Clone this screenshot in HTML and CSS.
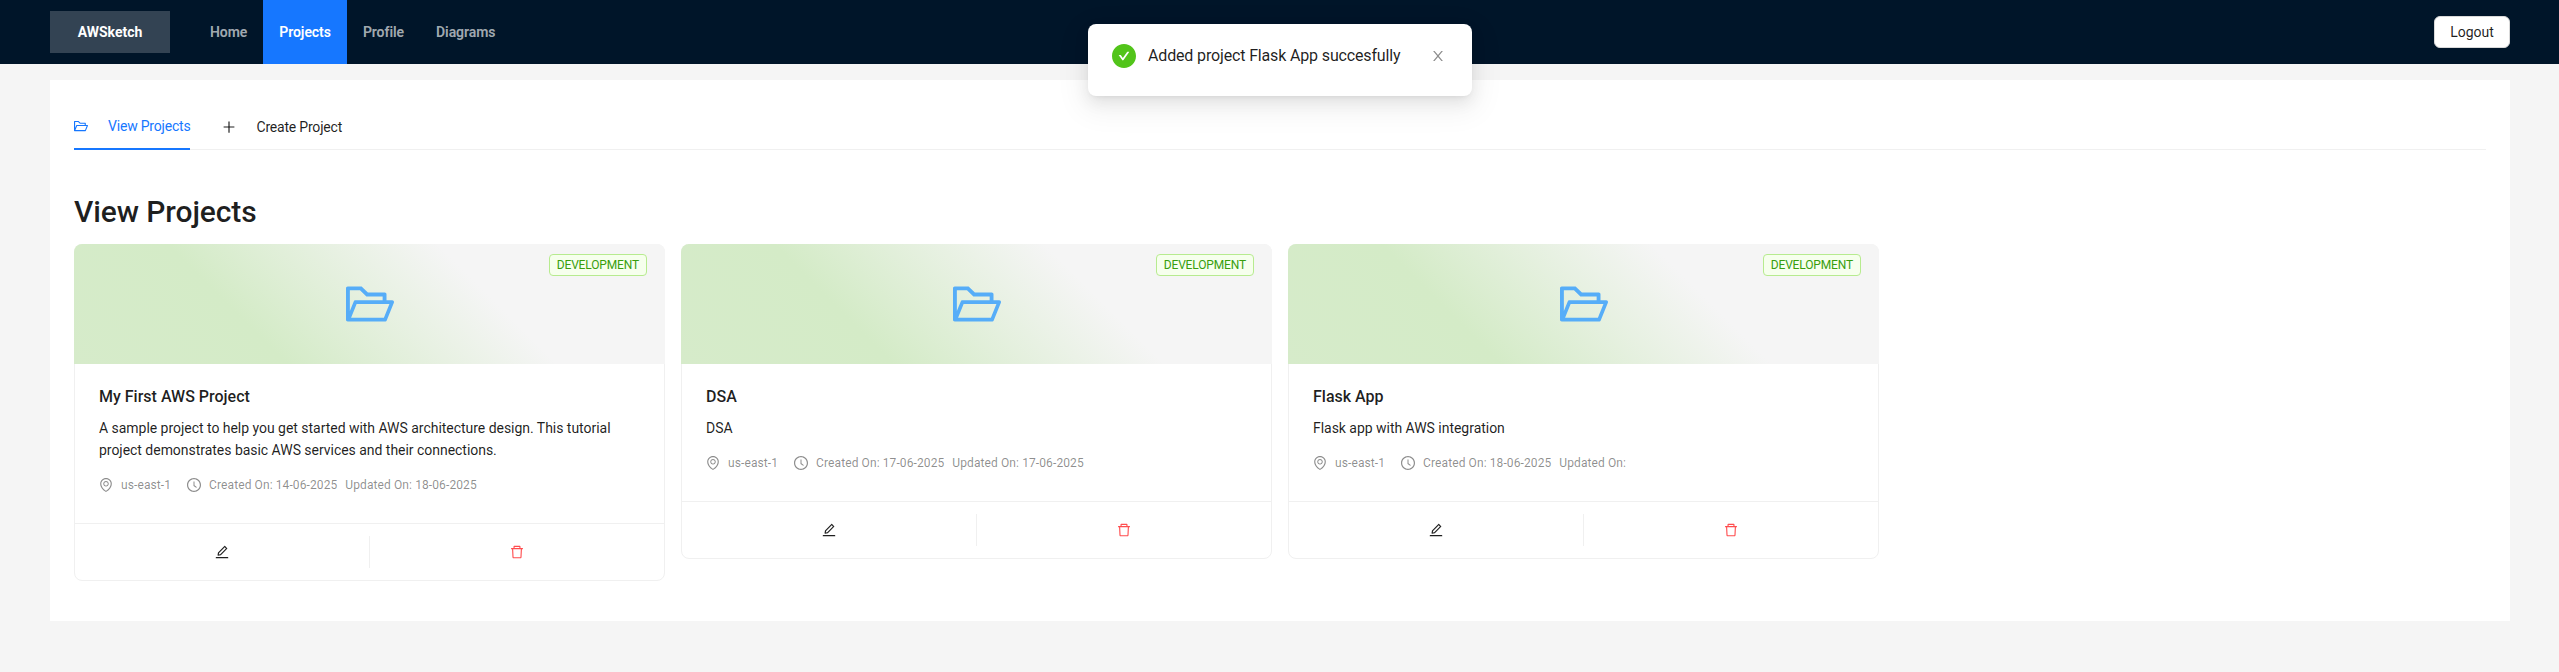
FILE: index.html
```html
<!DOCTYPE html>
<html lang="en">
<head>
    <meta charset="UTF-8">
    <title>AWSketch</title>
    <link rel="stylesheet" href="styles.css">
</head>
<body>

    <header class="topbar">
        <div class="logo">AWSketch</div>
        <nav class="menu">
            <a class="menu-item">Home</a>
            <a class="menu-item active">Projects</a>
            <a class="menu-item">Profile</a>
            <a class="menu-item">Diagrams</a>
        </nav>
        <button class="logout">Logout</button>
    </header>

    <div class="toast">
        <svg class="toast-icon" viewBox="64 64 896 896"><path d="M512 64C264.6 64 64 264.6 64 512s200.6 448 448 448 448-200.6 448-448S759.4 64 512 64zm193.5 301.7l-210.6 292a31.8 31.8 0 01-51.7 0L318.5 484.9c-3.8-5.3 0-12.7 6.5-12.7h46.9c10.2 0 19.9 4.9 25.9 13.3l71.2 98.8 157.2-218c6-8.3 15.6-13.3 25.9-13.3H699c6.5 0 10.3 7.4 6.5 12.7z"/></svg>
        <div class="toast-text">Added project Flask App succesfully</div>
        <svg class="toast-close" viewBox="64 64 896 896"><path d="M563.8 512l262.5-312.9c4.4-5.2.7-13.1-6.1-13.1h-79.8c-4.7 0-9.2 2.1-12.3 5.7L511.6 449.8 295.1 191.7c-3-3.6-7.5-5.7-12.3-5.7H203c-6.8 0-10.5 7.9-6.1 13.1L459.4 512 196.9 824.9A7.95 7.95 0 00203 838h79.8c4.7 0 9.2-2.1 12.3-5.7l216.5-258.1 216.5 258.1c3 3.6 7.5 5.7 12.3 5.7h79.8c6.8 0 10.5-7.9 6.1-13.1L563.8 512z"/></svg>
    </div>

    <main class="content">
        <div class="tabs">
            <div class="tab active">
                <svg class="icon" viewBox="64 64 896 896"><path d="M928 444H820V330.4c0-17.7-14.3-32-32-32H473L355.7 186.2a8.15 8.15 0 00-5.5-2.2H96c-17.7 0-32 14.3-32 32v592c0 17.7 14.3 32 32 32h698c13 0 24.8-7.9 29.7-20l134-332c1.5-3.8 2.3-7.9 2.3-12 0-17.7-14.3-32-32-32zM136 256h188.5l119.6 114.4H748V444H238c-13 0-24.8 7.9-29.7 20L136 643.2V256zm635.3 512H159l103.3-256h612.4L771.3 768z"/></svg>
                View Projects
            </div>
            <div class="tab">
                <svg class="icon plus" viewBox="64 64 896 896"><path d="M482 152h60q8 0 8 8v704q0 8-8 8h-60q-8 0-8-8V160q0-8 8-8z"/><path d="M176 474h672q8 0 8 8v60q0 8-8 8H176q-8 0-8-8v-60q0-8 8-8z"/></svg>
                Create Project
            </div>
        </div>

        <h2 class="page-title">View Projects</h2>

        <div class="project-grid">

            <div class="card">
                <div class="cover">
                    <span class="tag">DEVELOPMENT</span>
                    <svg class="cover-icon" viewBox="64 64 896 896"><path d="M928 444H820V330.4c0-17.7-14.3-32-32-32H473L355.7 186.2a8.15 8.15 0 00-5.5-2.2H96c-17.7 0-32 14.3-32 32v592c0 17.7 14.3 32 32 32h698c13 0 24.8-7.9 29.7-20l134-332c1.5-3.8 2.3-7.9 2.3-12 0-17.7-14.3-32-32-32zM136 256h188.5l119.6 114.4H748V444H238c-13 0-24.8 7.9-29.7 20L136 643.2V256zm635.3 512H159l103.3-256h612.4L771.3 768z"/></svg>
                </div>
                <div class="card-body">
                    <div class="card-title">My First AWS Project</div>
                    <p class="card-desc">A sample project to help you get started with AWS architecture design. This tutorial project demonstrates basic AWS services and their connections.</p>
                    <div class="card-meta">
                        <svg class="icon" viewBox="64 64 896 896"><path d="M854.6 289.1a362.49 362.49 0 00-79.9-115.7 370.83 370.83 0 00-118.2-77.8C610.7 76.6 562.1 67 512 67c-50.1 0-98.7 9.6-144.5 28.5-44.3 18.3-84 44.5-118.2 77.8A363.6 363.6 0 00169.4 289c-19.5 45-29.4 92.8-29.4 142 0 70.6 16.9 140.9 50.1 208.7 26.7 54.5 64 107.6 111 158.1 80.3 86.2 164.5 138.9 188.4 153a43.9 43.9 0 0022.4 6.1c7.8 0 15.5-2 22.4-6.1 23.9-14.1 108.1-66.8 188.4-153 47-50.4 84.3-103.6 111-158.1C867.1 572 884 501.8 884 431.1c0-49.2-9.9-97-29.4-142zM512 880.2c-65.9-41.9-300-207.8-300-449.1 0-77.9 31.1-151.1 87.6-206.3C356.3 169.5 431.7 139 512 139s155.7 30.5 212.4 85.9C780.9 280 812 353.2 812 431.1c0 241.3-234.1 407.2-300 449.1zm0-617.2c-97.2 0-176 78.8-176 176s78.8 176 176 176 176-78.8 176-176-78.8-176-176-176zm79.2 255.2A111.6 111.6 0 01512 551c-29.9 0-58-11.7-79.2-32.8A111.6 111.6 0 01400 439c0-29.9 11.7-58 32.8-79.2C454 338.6 482.1 327 512 327c29.9 0 58 11.6 79.2 32.8C612.4 381 624 409.1 624 439c0 29.9-11.6 58-32.8 79.2z"/></svg>
                        <span class="region">us-east-1</span>
                        <svg class="icon" viewBox="64 64 896 896"><path d="M512 64C264.6 64 64 264.6 64 512s200.6 448 448 448 448-200.6 448-448S759.4 64 512 64zm0 820c-205.4 0-372-166.6-372-372s166.6-372 372-372 372 166.6 372 372-166.6 372-372 372z"/><path d="M686.7 638.6L544.1 535.5V288c0-4.4-3.6-8-8-8H488c-4.4 0-8 3.6-8 8v275.4c0 2.6 1.2 5 3.3 6.5l165.4 120.6c3.6 2.6 8.6 1.8 11.2-1.7l28.6-39c2.6-3.7 1.8-8.7-1.8-11.2z"/></svg>
                        <span>Created On: 14-06-2025</span>
                        <span>Updated On: 18-06-2025</span>
                    </div>
                </div>
                <div class="card-actions">
                    <div class="action">
                        <svg class="icon" viewBox="64 64 896 896"><path d="M257.7 752c2 0 4-.2 6-.5L431.9 722c2-.4 3.9-1.3 5.3-2.8l423.9-423.9a9.96 9.96 0 000-14.1L694.9 114.9c-1.9-1.9-4.4-2.9-7.1-2.9s-5.2 1-7.1 2.9L256.8 538.8c-1.5 1.5-2.4 3.3-2.8 5.3l-29.5 168.2a33.5 33.5 0 009.4 29.8c6.6 6.4 14.9 9.9 23.8 9.9zm67.4-174.4L687.8 215l73.3 73.3-362.7 362.6-88.9 15.7 15.6-89zM880 836H144c-17.7 0-32 14.3-32 32v36c0 4.4 3.6 8 8 8h784c4.4 0 8-3.6 8-8v-36c0-17.7-14.3-32-32-32z"/></svg>
                    </div>
                    <div class="action danger">
                        <svg class="icon" viewBox="64 64 896 896"><path d="M360 184h-8c4.4 0 8-3.6 8-8v8h304v-8c0 4.4 3.6 8 8 8h-8v72h72v-80c0-35.3-28.7-64-64-64H352c-35.3 0-64 28.7-64 64v80h72v-72zm504 72H160c-17.7 0-32 14.3-32 32v32c0 4.4 3.6 8 8 8h60.4l24.7 523c1.6 34.1 29.8 61 63.9 61h454c34.2 0 62.3-26.8 63.9-61l24.7-523H888c4.4 0 8-3.6 8-8v-32c0-17.7-14.3-32-32-32zM731.3 840H292.7l-24.2-512h487l-24.2 512z"/></svg>
                    </div>
                </div>
            </div>

            <div class="card">
                <div class="cover">
                    <span class="tag">DEVELOPMENT</span>
                    <svg class="cover-icon" viewBox="64 64 896 896"><path d="M928 444H820V330.4c0-17.7-14.3-32-32-32H473L355.7 186.2a8.15 8.15 0 00-5.5-2.2H96c-17.7 0-32 14.3-32 32v592c0 17.7 14.3 32 32 32h698c13 0 24.8-7.9 29.7-20l134-332c1.5-3.8 2.3-7.9 2.3-12 0-17.7-14.3-32-32-32zM136 256h188.5l119.6 114.4H748V444H238c-13 0-24.8 7.9-29.7 20L136 643.2V256zm635.3 512H159l103.3-256h612.4L771.3 768z"/></svg>
                </div>
                <div class="card-body">
                    <div class="card-title">DSA</div>
                    <p class="card-desc">DSA</p>
                    <div class="card-meta">
                        <svg class="icon" viewBox="64 64 896 896"><path d="M854.6 289.1a362.49 362.49 0 00-79.9-115.7 370.83 370.83 0 00-118.2-77.8C610.7 76.6 562.1 67 512 67c-50.1 0-98.7 9.6-144.5 28.5-44.3 18.3-84 44.5-118.2 77.8A363.6 363.6 0 00169.4 289c-19.5 45-29.4 92.8-29.4 142 0 70.6 16.9 140.9 50.1 208.7 26.7 54.5 64 107.6 111 158.1 80.3 86.2 164.5 138.9 188.4 153a43.9 43.9 0 0022.4 6.1c7.8 0 15.5-2 22.4-6.1 23.9-14.1 108.1-66.8 188.4-153 47-50.4 84.3-103.6 111-158.1C867.1 572 884 501.8 884 431.1c0-49.2-9.9-97-29.4-142zM512 880.2c-65.9-41.9-300-207.8-300-449.1 0-77.9 31.1-151.1 87.6-206.3C356.3 169.5 431.7 139 512 139s155.7 30.5 212.4 85.9C780.9 280 812 353.2 812 431.1c0 241.3-234.1 407.2-300 449.1zm0-617.2c-97.2 0-176 78.8-176 176s78.8 176 176 176 176-78.8 176-176-78.8-176-176-176zm79.2 255.2A111.6 111.6 0 01512 551c-29.9 0-58-11.7-79.2-32.8A111.6 111.6 0 01400 439c0-29.9 11.7-58 32.8-79.2C454 338.6 482.1 327 512 327c29.9 0 58 11.6 79.2 32.8C612.4 381 624 409.1 624 439c0 29.9-11.6 58-32.8 79.2z"/></svg>
                        <span class="region">us-east-1</span>
                        <svg class="icon" viewBox="64 64 896 896"><path d="M512 64C264.6 64 64 264.6 64 512s200.6 448 448 448 448-200.6 448-448S759.4 64 512 64zm0 820c-205.4 0-372-166.6-372-372s166.6-372 372-372 372 166.6 372 372-166.6 372-372 372z"/><path d="M686.7 638.6L544.1 535.5V288c0-4.4-3.6-8-8-8H488c-4.4 0-8 3.6-8 8v275.4c0 2.6 1.2 5 3.3 6.5l165.4 120.6c3.6 2.6 8.6 1.8 11.2-1.7l28.6-39c2.6-3.7 1.8-8.7-1.8-11.2z"/></svg>
                        <span>Created On: 17-06-2025</span>
                        <span>Updated On: 17-06-2025</span>
                    </div>
                </div>
                <div class="card-actions">
                    <div class="action">
                        <svg class="icon" viewBox="64 64 896 896"><path d="M257.7 752c2 0 4-.2 6-.5L431.9 722c2-.4 3.9-1.3 5.3-2.8l423.9-423.9a9.96 9.96 0 000-14.1L694.9 114.9c-1.9-1.9-4.4-2.9-7.1-2.9s-5.2 1-7.1 2.9L256.8 538.8c-1.5 1.5-2.4 3.3-2.8 5.3l-29.5 168.2a33.5 33.5 0 009.4 29.8c6.6 6.4 14.9 9.9 23.8 9.9zm67.4-174.4L687.8 215l73.3 73.3-362.7 362.6-88.9 15.7 15.6-89zM880 836H144c-17.7 0-32 14.3-32 32v36c0 4.4 3.6 8 8 8h784c4.4 0 8-3.6 8-8v-36c0-17.7-14.3-32-32-32z"/></svg>
                    </div>
                    <div class="action danger">
                        <svg class="icon" viewBox="64 64 896 896"><path d="M360 184h-8c4.4 0 8-3.6 8-8v8h304v-8c0 4.4 3.6 8 8 8h-8v72h72v-80c0-35.3-28.7-64-64-64H352c-35.3 0-64 28.7-64 64v80h72v-72zm504 72H160c-17.7 0-32 14.3-32 32v32c0 4.4 3.6 8 8 8h60.4l24.7 523c1.6 34.1 29.8 61 63.9 61h454c34.2 0 62.3-26.8 63.9-61l24.7-523H888c4.4 0 8-3.6 8-8v-32c0-17.7-14.3-32-32-32zM731.3 840H292.7l-24.2-512h487l-24.2 512z"/></svg>
                    </div>
                </div>
            </div>

            <div class="card">
                <div class="cover">
                    <span class="tag">DEVELOPMENT</span>
                    <svg class="cover-icon" viewBox="64 64 896 896"><path d="M928 444H820V330.4c0-17.7-14.3-32-32-32H473L355.7 186.2a8.15 8.15 0 00-5.5-2.2H96c-17.7 0-32 14.3-32 32v592c0 17.7 14.3 32 32 32h698c13 0 24.8-7.9 29.7-20l134-332c1.5-3.8 2.3-7.9 2.3-12 0-17.7-14.3-32-32-32zM136 256h188.5l119.6 114.4H748V444H238c-13 0-24.8 7.9-29.7 20L136 643.2V256zm635.3 512H159l103.3-256h612.4L771.3 768z"/></svg>
                </div>
                <div class="card-body">
                    <div class="card-title">Flask App</div>
                    <p class="card-desc">Flask app with AWS integration</p>
                    <div class="card-meta">
                        <svg class="icon" viewBox="64 64 896 896"><path d="M854.6 289.1a362.49 362.49 0 00-79.9-115.7 370.83 370.83 0 00-118.2-77.8C610.7 76.6 562.1 67 512 67c-50.1 0-98.7 9.6-144.5 28.5-44.3 18.3-84 44.5-118.2 77.8A363.6 363.6 0 00169.4 289c-19.5 45-29.4 92.8-29.4 142 0 70.6 16.9 140.9 50.1 208.7 26.7 54.5 64 107.6 111 158.1 80.3 86.2 164.5 138.9 188.4 153a43.9 43.9 0 0022.4 6.1c7.8 0 15.5-2 22.4-6.1 23.9-14.1 108.1-66.8 188.4-153 47-50.4 84.3-103.6 111-158.1C867.1 572 884 501.8 884 431.1c0-49.2-9.9-97-29.4-142zM512 880.2c-65.9-41.9-300-207.8-300-449.1 0-77.9 31.1-151.1 87.6-206.3C356.3 169.5 431.7 139 512 139s155.7 30.5 212.4 85.9C780.9 280 812 353.2 812 431.1c0 241.3-234.1 407.2-300 449.1zm0-617.2c-97.2 0-176 78.8-176 176s78.8 176 176 176 176-78.8 176-176-78.8-176-176-176zm79.2 255.2A111.6 111.6 0 01512 551c-29.9 0-58-11.7-79.2-32.8A111.6 111.6 0 01400 439c0-29.9 11.7-58 32.8-79.2C454 338.6 482.1 327 512 327c29.9 0 58 11.6 79.2 32.8C612.4 381 624 409.1 624 439c0 29.9-11.6 58-32.8 79.2z"/></svg>
                        <span class="region">us-east-1</span>
                        <svg class="icon" viewBox="64 64 896 896"><path d="M512 64C264.6 64 64 264.6 64 512s200.6 448 448 448 448-200.6 448-448S759.4 64 512 64zm0 820c-205.4 0-372-166.6-372-372s166.6-372 372-372 372 166.6 372 372-166.6 372-372 372z"/><path d="M686.7 638.6L544.1 535.5V288c0-4.4-3.6-8-8-8H488c-4.4 0-8 3.6-8 8v275.4c0 2.6 1.2 5 3.3 6.5l165.4 120.6c3.6 2.6 8.6 1.8 11.2-1.7l28.6-39c2.6-3.7 1.8-8.7-1.8-11.2z"/></svg>
                        <span>Created On: 18-06-2025</span>
                        <span>Updated On:</span>
                    </div>
                </div>
                <div class="card-actions">
                    <div class="action">
                        <svg class="icon" viewBox="64 64 896 896"><path d="M257.7 752c2 0 4-.2 6-.5L431.9 722c2-.4 3.9-1.3 5.3-2.8l423.9-423.9a9.96 9.96 0 000-14.1L694.9 114.9c-1.9-1.9-4.4-2.9-7.1-2.9s-5.2 1-7.1 2.9L256.8 538.8c-1.5 1.5-2.4 3.3-2.8 5.3l-29.5 168.2a33.5 33.5 0 009.4 29.8c6.6 6.4 14.9 9.9 23.8 9.9zm67.4-174.4L687.8 215l73.3 73.3-362.7 362.6-88.9 15.7 15.6-89zM880 836H144c-17.7 0-32 14.3-32 32v36c0 4.4 3.6 8 8 8h784c4.4 0 8-3.6 8-8v-36c0-17.7-14.3-32-32-32z"/></svg>
                    </div>
                    <div class="action danger">
                        <svg class="icon" viewBox="64 64 896 896"><path d="M360 184h-8c4.4 0 8-3.6 8-8v8h304v-8c0 4.4 3.6 8 8 8h-8v72h72v-80c0-35.3-28.7-64-64-64H352c-35.3 0-64 28.7-64 64v80h72v-72zm504 72H160c-17.7 0-32 14.3-32 32v32c0 4.4 3.6 8 8 8h60.4l24.7 523c1.6 34.1 29.8 61 63.9 61h454c34.2 0 62.3-26.8 63.9-61l24.7-523H888c4.4 0 8-3.6 8-8v-32c0-17.7-14.3-32-32-32zM731.3 840H292.7l-24.2-512h487l-24.2 512z"/></svg>
                    </div>
                </div>
            </div>

        </div>
    </main>

</body>
</html>
```

FILE: styles.css
```css
*
{
    box-sizing: border-box;
    margin: 0;
    padding: 0;
}

body
{
    min-height: 100vh;
    background-color: #f5f5f5;
    font-family: "Roboto", "Noto Sans", sans-serif;
    font-size: 14px;
    line-height: 22px;
    color: rgba(0, 0, 0, 0.88);
}

.icon
{
    width: 14px;
    height: 14px;
    fill: currentColor;
    flex-shrink: 0;
}

/* top bar */

.topbar
{
    display: flex;
    align-items: center;
    height: 64px;
    padding: 0 49px 0 50px;
    background-color: #001529;
}

.logo
{
    display: flex;
    align-items: center;
    justify-content: center;
    width: 120px;
    height: 42px;
    margin-right: 24px;
    background-color: rgba(255, 255, 255, 0.2);
    color: #fff;
    font-weight: 700;
}

.menu
{
    display: flex;
    flex: 1;
    align-self: stretch;
}

.menu-item
{
    display: flex;
    align-items: center;
    padding: 0 16px;
    color: rgba(255, 255, 255, 0.65);
    font-weight: 600;
    letter-spacing: -0.06px;
}

.menu-item.active
{
    background-color: #1677ff;
    color: #fff;
}

.logout
{
    width: 76px;
    height: 32px;
    border: 1px solid #d9d9d9;
    border-radius: 6px;
    background-color: #fff;
    color: rgba(0, 0, 0, 0.88);
    font-family: inherit;
    font-size: 14px;
}

/* notification */

.toast
{
    position: absolute;
    top: 24px;
    left: 1088px;
    display: flex;
    width: 384px;
    height: 72px;
    padding: 20px 24px;
    border-radius: 8px;
    background-color: #fff;
    box-shadow: 0 6px 16px 0 rgba(0, 0, 0, 0.08), 0 3px 6px -4px rgba(0, 0, 0, 0.12), 0 9px 28px 8px rgba(0, 0, 0, 0.05);
}

.toast-icon
{
    width: 24px;
    height: 24px;
    fill: #52c41a;
}

.toast-text
{
    flex: 1;
    margin-left: 12px;
    font-size: 16px;
    line-height: 24px;
    letter-spacing: -0.15px;
}

.toast-close
{
    width: 14px;
    height: 14px;
    margin: 5px 3px 0 0;
    fill: rgba(0, 0, 0, 0.45);
}

/* page */

.content
{
    margin: 16px 49px 0 50px;
    padding: 24px;
    background-color: #fff;
}

.tabs
{
    display: flex;
    gap: 32px;
    margin-bottom: 43px;
    border-bottom: 1px solid #f0f0f0;
}

.tab
{
    display: flex;
    align-items: center;
    gap: 20px;
    height: 46px;
    margin-bottom: -1px;
    letter-spacing: -0.2px;
}

.tab.active
{
    border-bottom: 2px solid #1677ff;
    color: #1677ff;
}

.page-title
{
    margin-bottom: 13px;
    font-size: 30px;
    font-weight: 500;
    line-height: 38px;
    letter-spacing: -0.1px;
}

.project-grid
{
    display: grid;
    grid-template-columns: repeat(4, 1fr);
    gap: 16px;
    align-items: start;
    margin-bottom: 16px;
}

/* project card */

.card
{
    border: 1px solid #f0f0f0;
    border-radius: 8px;
    background-color: #fff;
}

.cover
{
    position: relative;
    display: flex;
    align-items: center;
    justify-content: center;
    height: 120px;
    margin: -1px -1px 0;
    border-radius: 8px 8px 0 0;
    background-image: linear-gradient(45deg, #d6ebca 0%, #d4ebc7 30%, #f5f5f5 68%);
}

.cover-icon
{
    width: 48px;
    height: 48px;
    fill: #56adf8;
}

.tag
{
    position: absolute;
    top: 10px;
    right: 18px;
    padding: 0 7px;
    border: 1px solid #b7eb8f;
    border-radius: 4px;
    background-color: #f6ffed;
    color: #389e0d;
    font-size: 12px;
    line-height: 20px;
    letter-spacing: -0.15px;
}

.card-body
{
    padding: 21px 24px 28px;
}

.card-title
{
    margin-bottom: 8px;
    font-size: 16px;
    font-weight: 500;
    line-height: 24px;
}

.card-desc
{
    letter-spacing: -0.03px;
}

.card-meta
{
    display: flex;
    align-items: center;
    gap: 8px;
    height: 20px;
    margin-top: 14px;
    color: rgba(0, 0, 0, 0.45);
    font-size: 12px;
    letter-spacing: 0.1px;
}

.region
{
    margin-right: 8px;
}

.card-actions
{
    display: flex;
    padding: 12px 0;
    border-top: 1px solid #f0f0f0;
}

.action
{
    display: flex;
    flex: 1;
    align-items: center;
    justify-content: center;
    height: 32px;
}

.action:first-child
{
    border-right: 1px solid #f0f0f0;
}

.action.danger
{
    color: #ff4d4f;
}
```
